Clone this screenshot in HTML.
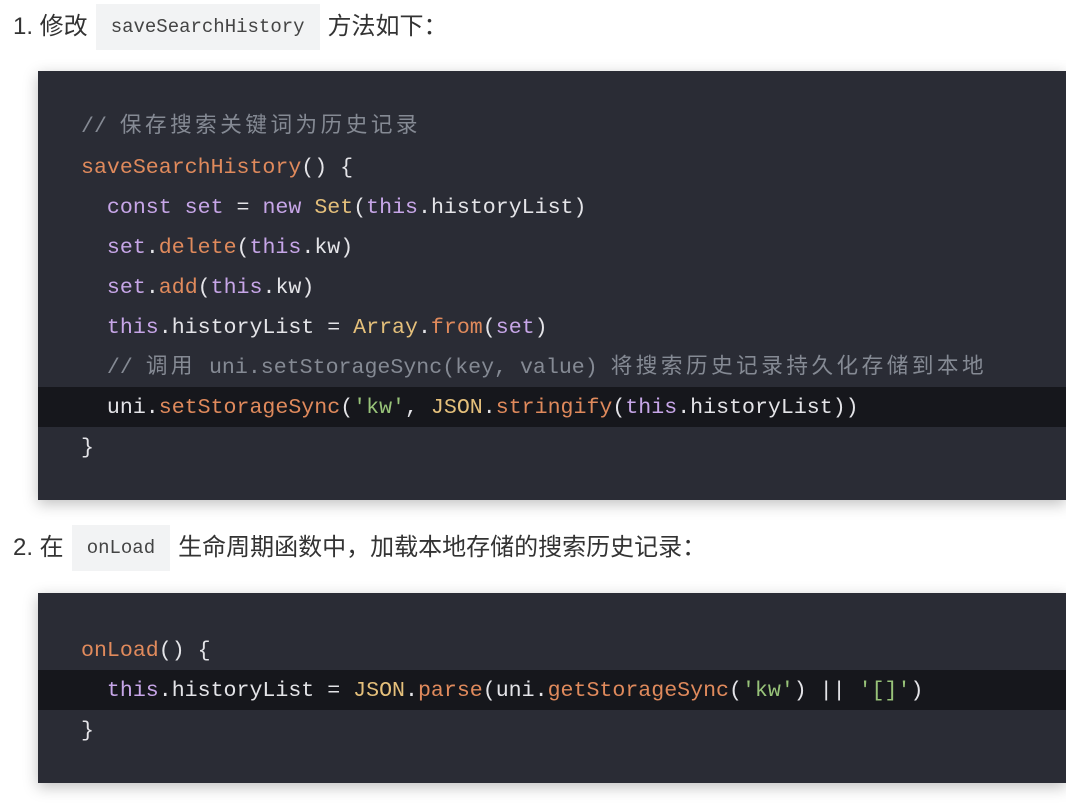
<!DOCTYPE html>
<html><head><meta charset="utf-8"><style>
body{margin:0;width:1066px;height:804px;background:#fff;position:relative;overflow:hidden;font-family:"Liberation Sans","Noto Sans CJK SC",sans-serif;}
.p{position:absolute;left:13px;font-size:24px;color:#333;line-height:46px;white-space:nowrap}
.ic{display:inline-block;background:#f2f3f4;font-family:"Liberation Mono","Noto Sans CJK SC",monospace;font-size:19px;color:#444;padding:0 15px;margin:0 8px;line-height:46px;vertical-align:top}
.blk{position:absolute;left:38px;right:0;background:#2a2c35;box-shadow:0 4px 14px rgba(0,0,0,.25)}
.ln{position:absolute;left:0;right:0;height:40px;line-height:42px;font-family:"Liberation Mono","Noto Sans CJK SC",monospace;font-size:21.6px;color:#e4e4e8;white-space:pre;padding-left:43px}
.hl{background:#16171c}
.c{color:#858a94}.f{color:#e08a5c}.k{color:#c7a6e8}.y{color:#e5c07b}.s{color:#98c379}
.z{letter-spacing:3.5px}
</style></head><body>
<div class="p" style="top:4px">1. 修改<span class="ic">saveSearchHistory</span>方法如下：</div>
<div class="blk" style="top:71px;height:429px">
<div class="ln" style="top:35px"><span class="c">// <span class="z">保存搜索关键词为历史记录</span></span></div>
<div class="ln" style="top:76px"><span class="f">saveSearchHistory</span>() {</div>
<div class="ln" style="top:116px">  <span class="k">const set</span> = <span class="k">new</span> <span class="y">Set</span>(<span class="k">this</span>.historyList)</div>
<div class="ln" style="top:156px">  <span class="k">set</span>.<span class="f">delete</span>(<span class="k">this</span>.kw)</div>
<div class="ln" style="top:196px">  <span class="k">set</span>.<span class="f">add</span>(<span class="k">this</span>.kw)</div>
<div class="ln" style="top:236px">  <span class="k">this</span>.historyList = <span class="y">Array</span>.<span class="f">from</span>(<span class="k">set</span>)</div>
<div class="ln" style="top:276px">  <span class="c">// <span class="z">调用</span> uni.setStorageSync(key, value) <span class="z">将搜索历史记录持久化存储到本地</span></span></div>
<div class="ln hl" style="top:316px">  uni.<span class="f">setStorageSync</span>(<span class="s">'kw'</span>, <span class="y">JSON</span>.<span class="f">stringify</span>(<span class="k">this</span>.historyList))</div>
<div class="ln" style="top:356px">}</div>
</div>
<div class="p" style="top:525px">2. 在<span class="ic">onLoad</span>生命周期函数中，加载本地存储的搜索历史记录：</div>
<div class="blk" style="top:593px;height:190px">
<div class="ln" style="top:37px"><span class="f">onLoad</span>() {</div>
<div class="ln hl" style="top:77px">  <span class="k">this</span>.historyList = <span class="y">JSON</span>.<span class="f">parse</span>(uni.<span class="f">getStorageSync</span>(<span class="s">'kw'</span>) || <span class="s">'[]'</span>)</div>
<div class="ln" style="top:117px">}</div>
</div>
</body></html>
